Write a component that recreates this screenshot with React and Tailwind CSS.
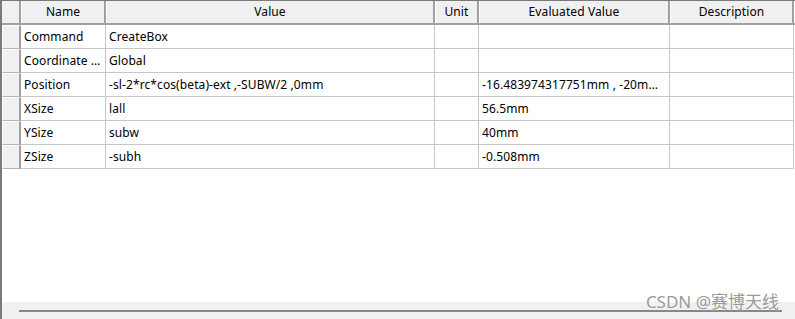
const columns = [
  { key: 'name', label: 'Name', w: 'w-[85px]' },
  { key: 'value', label: 'Value', w: 'w-[329px]' },
  { key: 'unit', label: 'Unit', w: 'w-[44px]' },
  { key: 'evaluated', label: 'Evaluated Value', w: 'w-[191px]' },
  { key: 'description', label: 'Description', w: 'w-[124px]' },
];

const rows = [
  { name: 'Command', value: 'CreateBox', unit: '', evaluated: '', description: '' },
  { name: 'Coordinate System', value: 'Global', unit: '', evaluated: '', description: '' },
  { name: 'Position', value: '-sl-2*rc*cos(beta)-ext ,-SUBW/2 ,0mm', unit: '', evaluated: '-16.483974317751mm , -20mm , 0mm', description: '' },
  { name: 'XSize', value: 'lall', unit: '', evaluated: '56.5mm', description: '' },
  { name: 'YSize', value: 'subw', unit: '', evaluated: '40mm', description: '' },
  { name: 'ZSize', value: '-subh', unit: '', evaluated: '-0.508mm', description: '' },
];

export default function App() {
  return (
    <div className="relative flex flex-col w-[795px] h-[319px] bg-white border-l-2 border-t border-[#7a7a7a] font-['Noto_Sans',sans-serif] text-[12px] tracking-[0.1px] text-black overflow-hidden">
      {/* header */}
      <div className="flex h-[24px] border-b-2 border-[#a0a0a0] shrink-0">
        <div className="w-[19px] bg-[#f0f0f0] border-r-2 border-[#a0a0a0] shrink-0" />
        {columns.map((c) => (
          <div
            key={c.key}
            className={`${c.w} shrink-0 flex items-center justify-center bg-[#f0f0f0] border-l border-white border-r-2 border-r-[#a0a0a0]`}
          >
            {c.label}
          </div>
        ))}
      </div>

      {rows.map((r) => (
        <div key={r.name} className="flex h-[24px] shrink-0">
          <div className="w-[19px] bg-[#f0f0f0] border-t border-l border-white border-r-2 border-r-[#a0a0a0] border-b border-b-[#b4b4b4] shrink-0" />
          {columns.map((c) => (
            <div
              key={c.key}
              className={`${c.w} shrink-0 flex items-center pl-[3px] pr-[2px] border-r border-b border-[#c8c8c8] overflow-hidden`}
            >
              <span className="truncate">{r[c.key]}</span>
            </div>
          ))}
        </div>
      ))}

      <div className="flex-1" />

      {/* horizontal scrollbar */}
      <div className="h-[17px] bg-[#f0f0f0] shrink-0 flex items-center pl-[17px] pr-[13px]">
        <div className="h-[2px] w-full bg-[#888888]" />
      </div>

      <div className="absolute right-[16px] bottom-[9px] text-[17px] tracking-normal text-[#9a9a9a] font-['Noto_Sans','Noto_Sans_CJK_SC',sans-serif] leading-none [text-shadow:0_0_2px_white]">
        CSDN @赛博天线
      </div>
    </div>
  );
}
